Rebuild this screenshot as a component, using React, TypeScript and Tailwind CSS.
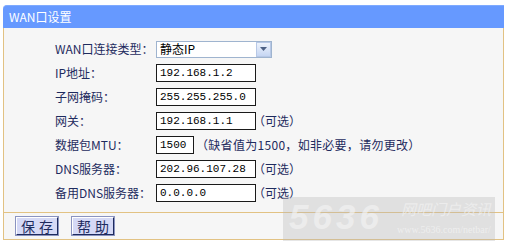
import React from 'react';

const font = "font-['SimSun','Noto_Sans_CJK_SC',sans-serif]";

interface RowProps {
    label: string;
    children: React.ReactNode;
}

const Row: React.FC<RowProps> = ({ label, children }) => (
    <div className="flex items-center h-[24px]">
        <div className="w-[101px] text-[12px] text-[#1e2b5e] whitespace-nowrap">{label}</div>
        <div className="flex items-center">{children}</div>
    </div>
);

const TextBox: React.FC<{ value: string; width?: string }> = ({ value, width = 'w-[100px]' }) => (
    <div className={`${width} h-[18px] bg-white border border-[#1a1a1a] flex items-center pl-[3px] text-[11px] text-black font-['Liberation_Mono',monospace] whitespace-nowrap overflow-hidden`}>
        {value}
    </div>
);

const Hint: React.FC<{ text: string }> = ({ text }) => (
    <span className="text-[12px] text-[#1e2b5e] whitespace-nowrap -ml-[3px]">{text}</span>
);

const App: React.FC = () => {
    return (
        <div className={`relative w-[508px] h-[245px] bg-white pt-[5px] pl-[3px] pr-[4px] ${font}`}>
            <div className="h-[23px] bg-[#6699ff] border-t border-[#7eaaff] rounded-tl-[4px] flex items-center pl-[6px] text-[12px] text-white">
                WAN口设置
            </div>
            <div className="bg-[#f6f6f6] border-x border-b border-[#e2c283]">
                <div className="pt-[9px] pb-[7px] pl-[51px]">
                    <Row label="WAN口连接类型：">
                        <div className="w-[116px] h-[17px] bg-white border border-[#9fb4cf] flex items-center justify-between pl-[3px] text-[12px] text-black">
                            <span>静态IP</span>
                            <div className="w-[15px] h-[15px] bg-gradient-to-b from-[#eef3fc] to-[#c6d6f3] border border-[#b7c8e6] flex items-center justify-center">
                                <svg width="7" height="4" viewBox="0 0 7 4">
                                    <path d="M0 0 L7 0 L3.5 4 Z" fill="#4d6185" />
                                </svg>
                            </div>
                        </div>
                    </Row>
                    <Row label="IP地址：">
                        <TextBox value="192.168.1.2" />
                    </Row>
                    <Row label="子网掩码：">
                        <TextBox value="255.255.255.0" />
                    </Row>
                    <Row label="网关：">
                        <TextBox value="192.168.1.1" />
                        <Hint text="（可选）" />
                    </Row>
                    <Row label="数据包MTU：">
                        <TextBox value="1500" width="w-[38px]" />
                        <span className="text-[12px] text-[#1e2b5e] whitespace-nowrap ml-[2px] tracking-[0.3px]">（缺省值为1500，如非必要，请勿更改）</span>
                    </Row>
                    <Row label="DNS服务器：">
                        <TextBox value="202.96.107.28" />
                        <Hint text="（可选）" />
                    </Row>
                    <Row label="备用DNS服务器：">
                        <TextBox value="0.0.0.0" />
                        <Hint text="（可选）" />
                    </Row>
                </div>
                <div className="border-t border-[#e2c283] flex items-center gap-[14px] pl-[12px] pt-[4px] pb-[4px]">
                    <button className="w-[42px] h-[18px] bg-[#d5d9f6] border border-[#1e2b5e] border-t-white border-l-white outline outline-1 outline-[#8a93c0] text-[14px] leading-none text-[#1e2b5e] tracking-[4px] pl-[4px]">
                        保存
                    </button>
                    <button className="w-[42px] h-[18px] bg-[#d5d9f6] border border-[#1e2b5e] border-t-white border-l-white outline outline-1 outline-[#8a93c0] text-[14px] leading-none text-[#1e2b5e] tracking-[4px] pl-[4px]">
                        帮助
                    </button>
                </div>
            </div>

            {/* watermark over the lower right corner */}
            <div className="absolute left-[283px] top-[197px] w-[212px] h-[44px] bg-[#b8b8b8]/35 pointer-events-none overflow-hidden whitespace-nowrap">
                <span className="absolute left-[6px] top-[2px] text-[35px] font-bold italic leading-none text-[#f2f2f2]/70 font-['Liberation_Sans',sans-serif] tracking-[4px]">5636</span>
                <span className="absolute left-[118px] top-[4px] text-[15px] italic leading-none text-[#f2f2f2]/70 font-['Noto_Sans_CJK_SC',sans-serif]">网吧门户资讯</span>
                <span className="absolute left-[114px] top-[28px] text-[10px] leading-none text-[#f2f2f2]/80 font-['Liberation_Serif',serif]">www.5636.com/netbar/</span>
            </div>
        </div>
    );
};

export default App;
